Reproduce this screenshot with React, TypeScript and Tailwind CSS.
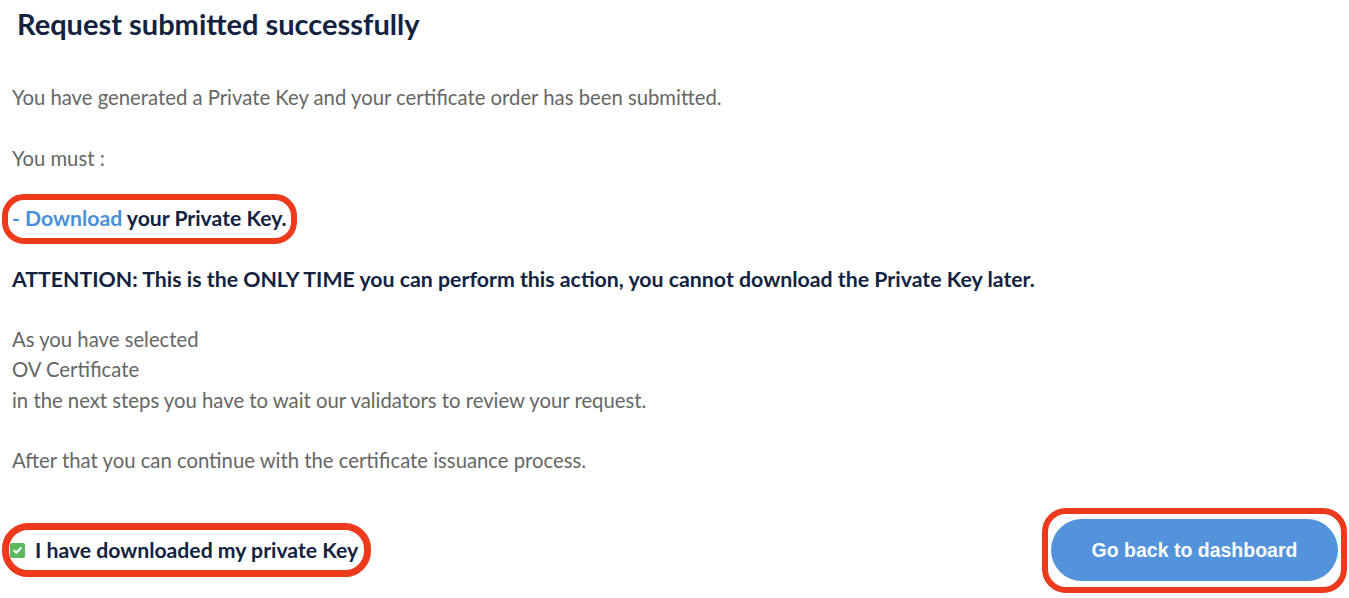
import React from 'react';

const Mark: React.FC<{ className: string }> = ({ className }) => (
  <span
    className={`pointer-events-none absolute rounded-[22px] border-[6px] border-[#ee3a1c] ${className}`}
  />
);

export default function App() {
  return (
    <div className="min-h-[598px] w-[1349px] bg-white font-['Lato','Open_Sans',sans-serif] text-[20.3px] leading-[30.25px] text-[#666666]">
      <div className="pl-[17px] pt-[5px] text-[29px] font-bold leading-[38px] text-[#12233f]">
        Request submitted successfully
      </div>

      <div className="pl-[12px] pt-[39px] pr-[10px]">
        <p className="mb-[30.25px]">
          You have generated a Private Key and your certificate order has been submitted.
        </p>
        <p className="mb-[30.25px]">You must :</p>
        <p className="mb-[30.25px] text-[21.2px]">
          <span className="relative inline-block font-bold text-[#12233f]">
            <a className="text-[#4a90d9]" href="#">
              - Download
            </a>{' '}
            your Private Key.
            <Mark className="-left-[10px] -right-[10px] -top-[9px] -bottom-[11px]" />
          </span>
        </p>
        <p className="mb-[30.25px] text-[21.3px] font-bold text-[#12233f]">
          ATTENTION: This is the ONLY TIME you can perform this action, you cannot download the Private Key later.
        </p>
        <p>As you have selected</p>
        <p>OV Certificate</p>
        <p className="mb-[30.25px]">in the next steps you have to wait our validators to review your request.</p>
        <p>After that you can continue with the certificate issuance process.</p>

        <div className="mt-[44px] flex items-center justify-between">
          <label className="relative flex items-center gap-[10px] text-[21.2px] font-bold text-[#12233f]">
            <span className="-ml-[2px] flex h-[15px] w-[15px] shrink-0 items-center justify-center rounded-[2px] bg-[#5cb85c]">
              <svg width="11" height="11" viewBox="0 0 11 11" fill="none">
                <path d="M2.2 5.6l2.2 2.2 4.4-4.8" stroke="white" strokeWidth="2" strokeLinecap="round" strokeLinejoin="round" />
              </svg>
            </span>
            I have downloaded my private Key
            <Mark className="-left-[10px] -right-[13px] -top-[12px] -bottom-[12px] rounded-[26px] border-[7px]" />
          </label>

          <div className="relative mr-[1px]">
            <button className="h-[62px] w-[287px] rounded-full bg-[#5293db] font-['Liberation_Sans',Arial,sans-serif] text-[19.5px] font-bold text-white">
              Go back to dashboard
            </button>
            <Mark className="-left-[9px] -right-[9px] -top-[11px] -bottom-[12px] rounded-[24px]" />
          </div>
        </div>
      </div>
    </div>
  );
}
